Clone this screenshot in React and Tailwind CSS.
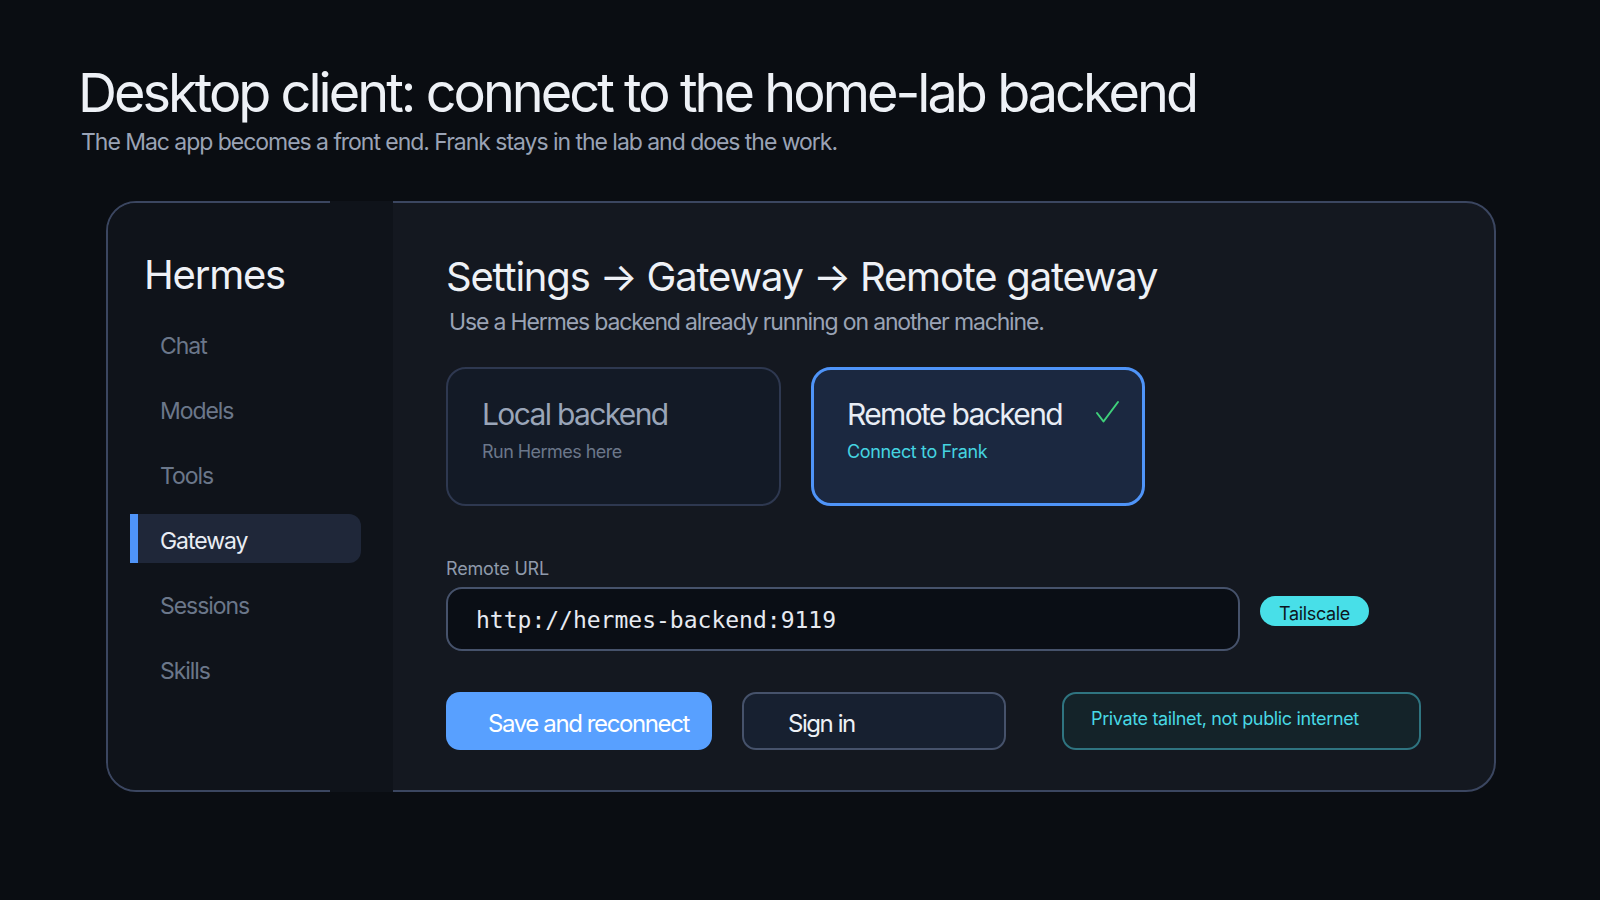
import React from 'react';

const navItems = ['Chat', 'Models', 'Tools', 'Gateway', 'Sessions', 'Skills'];

const Check = () => (
  <svg width="26" height="24" viewBox="0 0 26 24" fill="none" className="mt-[1px]">
    <path d="M3 13 L9.5 21.5 L24 2" stroke="#3fd07a" strokeWidth="2" strokeLinecap="round" strokeLinejoin="round" />
  </svg>
);

const Sidebar = () => (
  <div className="relative w-[285px] shrink-0 bg-[#0f131a] rounded-l-[28px] pt-[52px]">
    {/* patch that hides the card border over the sidebar's right edge */}
    <div className="absolute left-[222px] -top-[2px] -bottom-[2px] w-[63px] bg-[#0f131a]" />
    <div className="relative pl-[36px] text-[40px] leading-none text-[#eef1f6] tracking-[-0.03em]">Hermes</div>
    <div className="relative mt-[24px] ml-[22px] flex flex-col gap-[16px]">
      {navItems.map((item) => {
        const active = item === 'Gateway';
        return (
          <div
            key={item}
            className={
              active
                ? 'flex h-[49px] w-[231px] items-center rounded-r-[12px] bg-[#1f2739] border-l-[8px] border-[#4f94f8] pl-[22px] pt-[5px] text-[23px] leading-none text-[#e9edf4] tracking-[-0.046em]'
                : 'flex h-[49px] w-[231px] items-center pl-[30px] pt-[5px] text-[23px] leading-none text-[#6b778a] tracking-[-0.046em]'
            }
          >
            {item}
          </div>
        );
      })}
    </div>
  </div>
);

const Main = () => (
  <div className="flex-1 pt-[54px] pl-[53px]">
    <h2 className="text-[40px] leading-none text-[#eef1f6] tracking-[-0.03em]">
      Settings → Gateway → Remote gateway
    </h2>
    <p className="mt-[14px] pl-[3px] text-[23px] leading-none text-[#9aa3b5] tracking-[-0.05em]">
      Use a Hermes backend already running on another machine.
    </p>

    <div className="mt-[33px] flex gap-[30px]">
      <div className="h-[139px] w-[335px] rounded-[20px] border-2 border-[#2e3850] bg-[#131a26] pt-[30px] pl-[34px]">
        <div className="text-[30px] leading-none text-[#9aa5b8] tracking-[-0.055em]">Local backend</div>
        <div className="mt-[14px] text-[18px] leading-none text-[#6b778a] tracking-[-0.03em]">Run Hermes here</div>
      </div>
      <div className="h-[139px] w-[334px] rounded-[20px] border-[3px] border-[#4f94f8] bg-[#1b2840] pt-[29px] pl-[33px] pr-[22px]">
        <div className="flex items-start justify-between">
          <div className="text-[30px] leading-none text-[#e8edf5] tracking-[-0.055em]">Remote backend</div>
          <Check />
        </div>
        <div className="mt-[14px] text-[18px] leading-none text-[#45d4e0] tracking-[-0.02em]">Connect to Frank</div>
      </div>
    </div>

    <div className="mt-[54px] text-[18px] leading-none text-[#8f9aab] tracking-[-0.01em]">Remote URL</div>
    <div className="mt-[9px] flex items-start gap-[20px]">
      <div className="flex h-[64px] w-[794px] items-center rounded-[16px] border-2 border-[#46526b] bg-[#0a0e15] pl-[28px] pt-[3px] font-['DejaVu_Sans_Mono',monospace] text-[23px] text-[#e6eaf1]">
        http://hermes-backend:9119
      </div>
      <div className="mt-[9px] flex h-[30px] w-[109px] items-center justify-center rounded-full bg-[#48dfe8] pt-[6px] text-[18px] leading-none text-[#0d1520] tracking-[-0.02em]">
        Tailscale
      </div>
    </div>

    <div className="mt-[41px] flex">
      <div className="flex h-[58px] w-[266px] items-center rounded-[14px] bg-[#58a0ff] pl-[42px] pt-[6px] text-[24px] leading-none text-white tracking-[-0.058em]">
        Save and reconnect
      </div>
      <div className="ml-[30px] flex h-[58px] w-[264px] items-center rounded-[14px] border-2 border-[#46526b] bg-[#172030] pl-[44px] pt-[6px] text-[24px] leading-none text-[#eef1f6] tracking-[-0.06em]">
        Sign in
      </div>
      <div className="ml-[56px] h-[58px] w-[359px] rounded-[14px] border-2 border-[#2f7480] bg-[#142329] pl-[27px] pt-[16px] text-[18px] leading-none text-[#48d8e4] tracking-[-0.02em]">
        Private tailnet, not public internet
      </div>
    </div>
  </div>
);

export default function App() {
  return (
    <div className="w-[1600px] h-[900px] overflow-hidden bg-[#0a0d12] pl-[78px] pt-[66px] font-['Inter','Liberation_Sans',sans-serif]">
      <h1 className="text-[54px] leading-none text-[#eef1f6] tracking-[-0.055em]">
        Desktop client: connect to the home-lab backend
      </h1>
      <p className="mt-[11px] pl-[3px] text-[23px] leading-none text-[#9aa3b5] tracking-[-0.045em]">
        The Mac app becomes a front end. Frank stays in the lab and does the work.
      </p>

      <div className="mt-[47px] ml-[28px] flex h-[591px] w-[1390px] rounded-[30px] border-2 border-[#3b4660] bg-[#141820]">
        <Sidebar />
        <Main />
      </div>
    </div>
  );
}
